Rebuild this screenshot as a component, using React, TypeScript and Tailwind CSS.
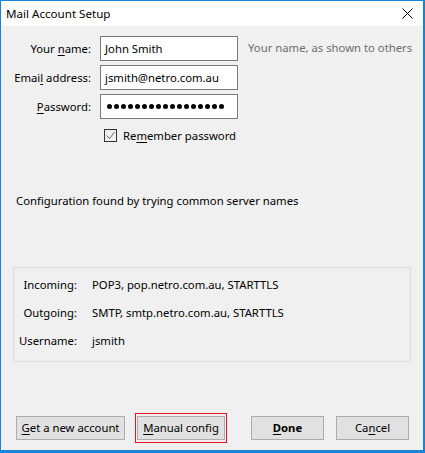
import React from "react";

const font = { fontFamily: '"Noto Sans", "Open Sans", sans-serif' };

function U({ children }: { children: React.ReactNode }) {
  return <span className="underline underline-offset-2 decoration-1">{children}</span>;
}

function Field({ label, children }: { label: React.ReactNode; children: React.ReactNode }) {
  return (
    <div className="flex items-center h-[25px]">
      <div className="w-[90px] text-right">{label}</div>
      <div className="ml-[9px] w-[138px] h-[25px] border border-[#7a7a7a] bg-white flex items-center pl-[4px]">
        {children}
      </div>
    </div>
  );
}

function Btn({ children, w, bold }: { children: React.ReactNode; w: string; bold?: boolean }) {
  return (
    <div className={`${w} h-[24px] border border-[#adadad] bg-[#e1e1e1] flex items-center justify-center ${bold ? "font-bold" : ""}`}>
      {children}
    </div>
  );
}

export default function App() {
  const info = [
    { k: "Incoming:", v: "POP3, pop.netro.com.au, STARTTLS" },
    { k: "Outgoing:", v: "SMTP, smtp.netro.com.au, STARTTLS" },
    { k: "Username:", v: "jsmith" },
  ];

  return (
    <div
      className="w-[425px] h-[453px] border-t border-l border-r-2 border-b-[3px] border-[#1883d7] flex flex-col text-[11.3px] text-black leading-[16px]"
      style={font}
    >
      {/* title bar */}
      <div className="h-[25px] bg-white flex items-center justify-between pl-[5px] pr-[10px]">
        <span className="text-[11.6px]">Mail Account Setup</span>
        <svg width="11" height="11" viewBox="0 0 11 11">
          <path d="M0.5 0.5 L10.5 10.5 M10.5 0.5 L0.5 10.5" stroke="#000" strokeWidth="1" />
        </svg>
      </div>

      <div className="flex-1 bg-[#f0f0f0] flex flex-col pt-[10px]">
        <div className="flex">
          <div className="flex flex-col gap-[4px]">
            <Field label={<>Your <U>n</U>ame:</>}>John Smith</Field>
            <Field label={<>Emai<U>l</U> address:</>}>jsmith@netro.com.au</Field>
            <Field label={<><U>P</U>assword:</>}>
              <div className="flex gap-[2px] ml-[2px]">
                {Array.from({ length: 17 }).map((_, i) => (
                  <div key={i} className="w-[5px] h-[5px] rounded-full bg-black" />
                ))}
              </div>
            </Field>
          </div>
          <div className="ml-[10px] mt-[4px] text-[#6d6d6d]">Your name, as shown to others</div>
        </div>

        <div className="flex items-center mt-[10px] ml-[103px] h-[13px]">
          <div className="w-[13px] h-[13px] border border-[#333] bg-[#f0f0f0] flex items-center justify-center">
            <svg width="11" height="11" viewBox="0 0 11 11">
              <path d="M1.5 5.5 L4.5 8.5 L9.5 2" stroke="#666" strokeWidth="1" fill="none" />
            </svg>
          </div>
          <span className="ml-[6px]">
            Re<U>m</U>ember password
          </span>
        </div>

        <div className="mt-[51px] ml-[15px]">Configuration found by trying common server names</div>

        <div className="mt-[58px] ml-[12px] w-[398px] h-[95px] border border-[#dcdcdc] pt-[3px] flex flex-col">
          {info.map((r) => (
            <div key={r.k} className="h-[28px] flex items-center">
              <div className="w-[63px] text-right">{r.k}</div>
              <div className="ml-[15px]">{r.v}</div>
            </div>
          ))}
        </div>

        <div className="mt-[51px] ml-[15px] flex items-center h-[30px]">
          <Btn w="w-[109px]">
            <U>G</U>et a new account
          </Btn>
          <div className="ml-[10px] w-[92px] h-[30px] border border-[#e81123] flex items-center pl-[1px]">
            <Btn w="w-[88px]">
              <U>M</U>anual config
            </Btn>
          </div>
          <div className="ml-[24px]">
            <Btn w="w-[73px]" bold>
              <U>D</U>one
            </Btn>
          </div>
          <div className="ml-[12px]">
            <Btn w="w-[73px]">
              Ca<U>n</U>cel
            </Btn>
          </div>
        </div>
      </div>
    </div>
  );
}
